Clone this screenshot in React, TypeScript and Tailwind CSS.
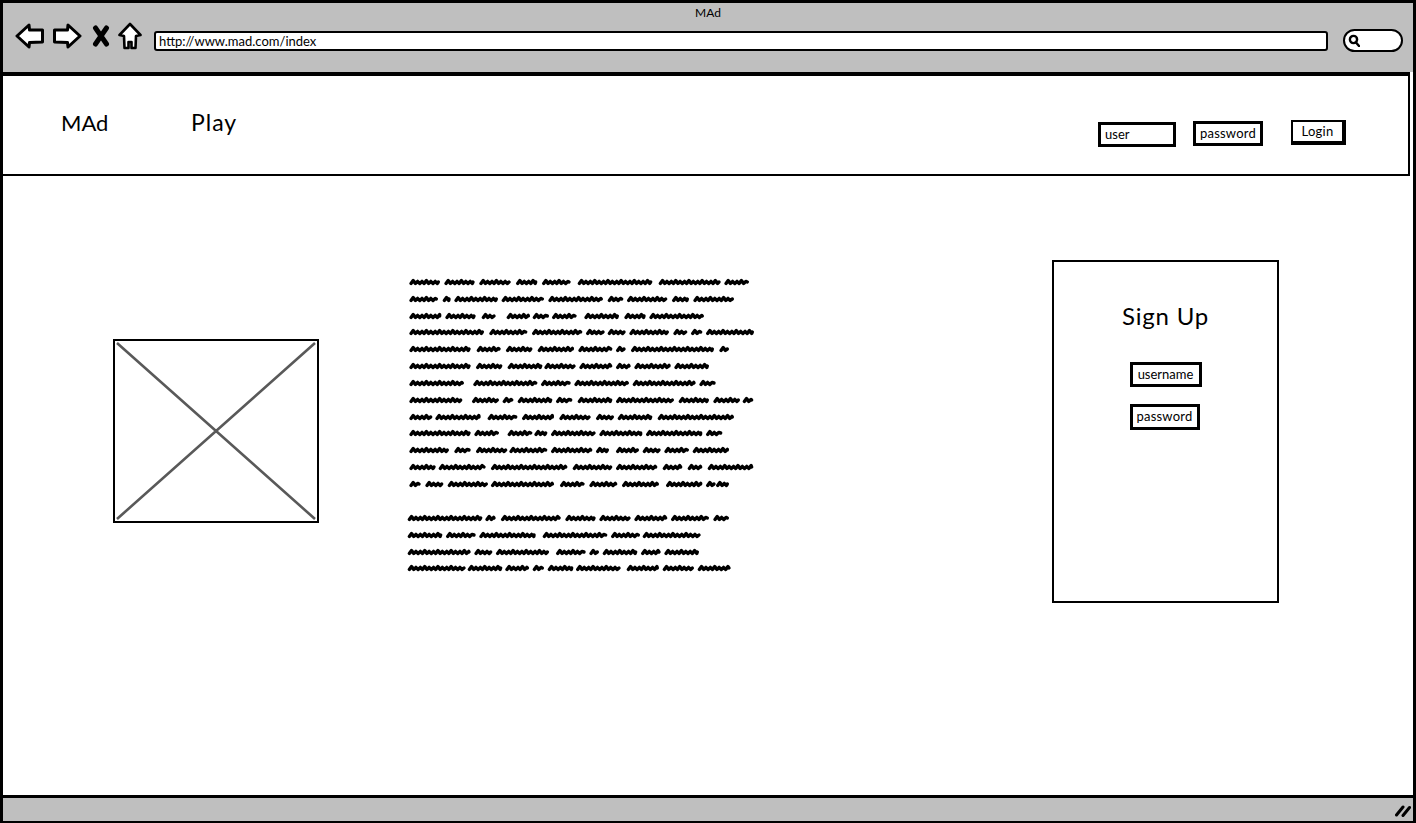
const paragraphOne: number[][][] = [
  [[30, 118], [135, 222], [240, 330], [350, 410], [428, 510], [535, 755], [778, 960], [975, 1045]],
  [[30, 112], [130, 150], [165, 292], [307, 430], [447, 607], [625, 668], [683, 800], [818, 865], [882, 1000]],
  [[30, 122], [138, 225], [247, 285], [322, 388], [400, 445], [458, 528], [555, 655], [675, 735], [750, 910]],
  [[30, 250], [270, 380], [398, 545], [560, 612], [625, 675], [690, 805], [822, 860], [875, 905], [920, 1060]],
  [[30, 210], [232, 300], [320, 395], [415, 520], [537, 635], [650, 675], [695, 940], [960, 985]],
  [[30, 210], [230, 305], [325, 425], [435, 525], [540, 635], [650, 690], [705, 810], [825, 925]],
  [[30, 190], [222, 410], [425, 510], [525, 685], [700, 885], [900, 945]],
  [[30, 185], [218, 295], [310, 338], [355, 455], [470, 515], [535, 635], [650, 820], [838, 925], [942, 1018], [1030, 1058]],
  [[30, 95], [108, 240], [265, 350], [368, 460], [480, 570], [590, 640], [655, 755], [775, 1000]],
  [[30, 210], [225, 295], [325, 395], [405, 440], [455, 585], [600, 725], [740, 905], [920, 965]],
  [[30, 145], [165, 210], [230, 320], [330, 440], [455, 575], [590, 625], [650, 715], [730, 780], [795, 865], [880, 985]],
  [[30, 105], [118, 255], [275, 500], [520, 635], [650, 770], [790, 845], [865, 905], [925, 1058]],
  [[30, 60], [78, 128], [145, 262], [275, 460], [482, 552], [570, 650], [668, 775], [800, 905], [920, 945], [950, 985]],
];

const paragraphTwo: number[][][] = [
  [[25, 245], [258, 285], [305, 480], [498, 585], [600, 690], [705, 800], [815, 925], [942, 985]],
  [[25, 125], [140, 225], [240, 405], [430, 620], [635, 718], [730, 900]],
  [[25, 210], [225, 275], [290, 445], [470, 555], [570, 595], [610, 710], [725, 780], [795, 895]],
  [[25, 195], [205, 305], [318, 385], [400, 430], [445, 518], [530, 660], [682, 775], [790, 880], [895, 990]],
];

// crop coordinates are 3x, line svg starts at x=405
function wavePath(start: number, end: number) {
  const x0 = start / 3 - 5 + 1;
  const x1 = end / 3 - 5 - 1;
  let d = `M${x0} 5.5`;
  let step = 0;
  for (let x = x0 + 2.2; x < x1; x += 2.2) {
    const y = step % 2 === 0 ? (step % 6 === 0 ? 2.6 : 3.4) : 5.4;
    d += ` L${x} ${y}`;
    step++;
  }
  return `${d} L${x1} 4`;
}

function ScribbleLine({ words }: { words: number[][] }) {
  return (
    <svg width="360" height="8" viewBox="0 0 360 8" className="block">
      {words.map(([a, b]) => (
        <path key={a} d={wavePath(a, b)} fill="none" stroke="#000" strokeWidth="3.4" strokeLinejoin="round" strokeLinecap="round" />
      ))}
    </svg>
  );
}

function BackIcon({ flip = false }: { flip?: boolean }) {
  return (
    <svg width="30" height="26" viewBox="0 0 30 26" className={flip ? '-scale-x-100' : ''}>
      <path d="M2 13 L14 2 L14.5 7 L27.5 7 L27.5 19 L14.5 19.5 L14 24 Z" fill="#fff" stroke="#000" strokeWidth="3" strokeLinejoin="round" />
    </svg>
  );
}

function CloseIcon() {
  return (
    <svg width="18" height="22" viewBox="0 0 18 22">
      <path d="M3.5 3 L14.5 19 M14.5 3 L3.5 19" stroke="#000" strokeWidth="5" strokeLinecap="round" fill="none" />
    </svg>
  );
}

function HomeIcon() {
  return (
    <svg width="24" height="28" viewBox="0 0 24 28">
      <path d="M12 2 L22.5 13 L18 14 L17.5 26 L13.5 26 L13.5 20 L10.5 20 L10.5 26 L6.5 26 L6 14 L1.5 13 Z" fill="#fff" stroke="#000" strokeWidth="2.6" strokeLinejoin="round" />
    </svg>
  );
}

function SearchIcon() {
  return (
    <svg width="12" height="13" viewBox="0 0 12 13">
      <circle cx="5.5" cy="5.5" r="3.6" fill="none" stroke="#000" strokeWidth="2.4" />
      <path d="M8 8.5 L11 12" stroke="#000" strokeWidth="2.4" strokeLinecap="round" />
    </svg>
  );
}

export default function App() {
  return (
    <div className="flex h-[823px] w-[1416px] flex-col overflow-hidden border-[3px] border-b-[2px] border-black bg-white font-['Lato',sans-serif] text-black">
      {/* browser chrome */}
      <div className="relative flex h-[69px] shrink-0 items-start bg-[#bfbfbf] pl-[12px] pt-[20px]">
        <span className="absolute left-0 right-0 top-[2px] text-center text-[12px] leading-[16px]">MAd</span>
        <BackIcon />
        <span className="ml-[7px]"><BackIcon flip /></span>
        <span className="ml-[10px] mt-[2px]"><CloseIcon /></span>
        <span className="ml-[8px] -mt-[1px]"><HomeIcon /></span>
        <div className="ml-[12px] mt-[8px] flex h-[20px] w-[1174px] items-center rounded-[3px] border-[2.5px] border-black bg-white pl-[3px] text-[13px] leading-none">
          http://www.mad.com/index
        </div>
        <div className="ml-[15px] mt-[6px] flex h-[23px] w-[60px] items-center rounded-full border-[2.5px] border-black bg-white pl-[3px]">
          <SearchIcon />
        </div>
      </div>

      {/* site nav */}
      <div className="mr-[3px] flex h-[104px] shrink-0 items-center border-b-[2px] border-r-[2px] border-t-[4px] border-black pl-[58px] pr-[62px]">
        <span className="-mt-[6px] w-[130px] text-[22px]">MAd</span>
        <span className="-mt-[6px] text-[23px] tracking-[1px]">Play</span>
        <div className="ml-auto mt-[18px] flex items-start">
          <div className="mt-[1px] flex h-[25px] w-[78px] items-center border-[3px] border-black pl-[4px] text-[13px]">user</div>
          <div className="ml-[17px] flex h-[25px] w-[70px] items-center justify-center border-[3px] border-black text-[13px] tracking-[0.2px]">password</div>
          <div className="-mt-[1px] ml-[28px] flex h-[25px] w-[55px] items-center justify-center border-[2px] border-b-[4px] border-r-[4px] border-black text-[13px] tracking-[0.3px]">Login</div>
        </div>
      </div>

      {/* page body */}
      <div className="flex min-h-0 flex-1 items-start pl-[110px]">
        <div className="relative mt-[163px] h-[184px] w-[206px] shrink-0 border-2 border-black">
          <svg width="202" height="180" viewBox="0 0 202 180" className="absolute inset-0">
            <path d="M2 2 L200 178 M200 2 L2 178" stroke="#595959" strokeWidth="2.6" fill="none" />
          </svg>
        </div>
        <div className="ml-[86px] mt-[102px] flex w-[360px] shrink-0 flex-col gap-[8.83px]">
          {paragraphOne.map((words, i) => (
            <ScribbleLine key={i} words={words} />
          ))}
          <div className="flex flex-col gap-[8.9px] pt-[17px]">
            {paragraphTwo.map((words, i) => (
              <ScribbleLine key={i} words={words} />
            ))}
          </div>
        </div>
        <div className="ml-[287px] mt-[84px] flex h-[343px] w-[227px] shrink-0 flex-col items-center border-2 border-black">
          <span className="mt-[38px] text-[24px] leading-[32px] tracking-[0.8px]">Sign Up</span>
          <div className="mt-[30px] flex h-[25px] w-[72px] items-center justify-center border-[3px] border-black text-[13px]">username</div>
          <div className="-ml-[2px] mt-[17px] flex h-[26px] w-[70px] items-center justify-center border-[3px] border-black text-[13px] tracking-[0.2px]">password</div>
        </div>
      </div>

      {/* status bar */}
      <div className="flex h-[26px] shrink-0 items-center justify-end border-t-[3px] border-black bg-[#bfbfbf] pr-[2px]">
        <svg width="16" height="14" viewBox="0 0 16 14">
          <path d="M1.5 12 L8 4 M8 12.5 L14.5 4.5" stroke="#000" strokeWidth="3" strokeLinecap="round" fill="none" />
        </svg>
      </div>
    </div>
  );
}
